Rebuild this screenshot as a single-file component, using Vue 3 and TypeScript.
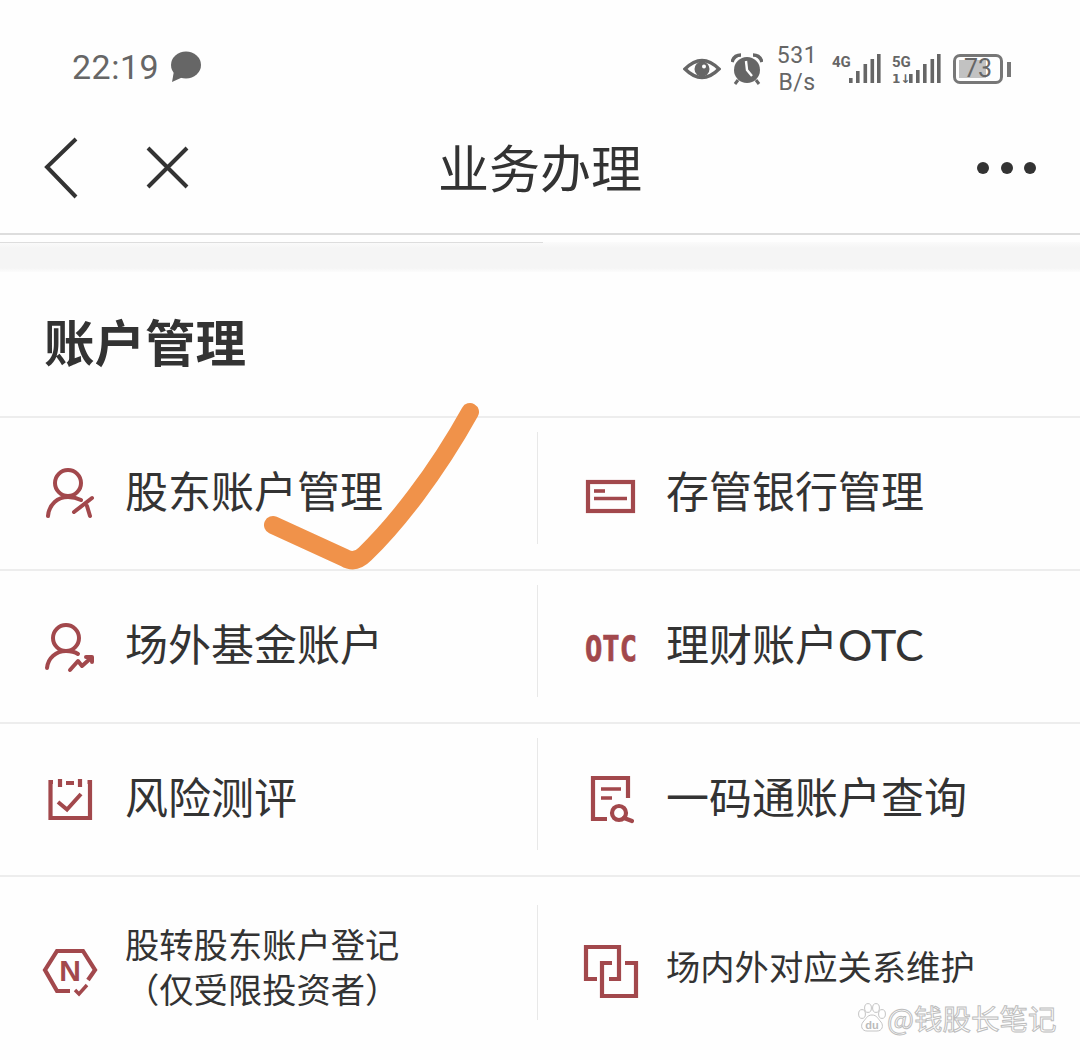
<script setup lang="ts">
interface Cell {
  icon: string
  label: string[]
  small?: boolean
}
interface Row {
  left: Cell
  right: Cell
  tall?: boolean
}
const rows: Row[] = [
  { left: { icon: 'user-slash', label: ['股东账户管理'] }, right: { icon: 'card', label: ['存管银行管理'] } },
  { left: { icon: 'user-trend', label: ['场外基金账户'] }, right: { icon: 'otc', label: ['理财账户OTC'] } },
  { left: { icon: 'calendar', label: ['风险测评'] }, right: { icon: 'doc-search', label: ['一码通账户查询'] } },
  {
    tall: true,
    left: { icon: 'hex', label: ['股转股东账户登记', '（仅受限投资者）'], small: true },
    right: { icon: 'squares', label: ['场内外对应关系维护'], small: true },
  },
]
const signalA = [
  { x: 0, h: 5 },
  { x: 7, h: 12 },
  { x: 14.5, h: 19 },
  { x: 21.5, h: 24 },
  { x: 28, h: 29 },
]
const signalB = [
  { x: 0, h: 9 },
  { x: 7, h: 13 },
  { x: 14, h: 19 },
  { x: 21.5, h: 24 },
  { x: 28, h: 29 },
]
</script>

<template>
  <div class="page">
    <header class="status">
      <div class="status-left">
        <span class="time">22:19</span>
        <svg class="bubble" width="34" height="32" viewBox="0 0 34 32">
          <ellipse cx="18" cy="14" rx="15" ry="13.5" fill="#666" />
          <path d="M6 20 L4 31 L15 26 Z" fill="#666" />
        </svg>
      </div>
      <div class="status-right">
        <svg width="38" height="24" viewBox="0 0 38 24">
          <path d="M2 12 Q19 -5 36 12 Q19 29 2 12 Z" fill="none" stroke="#666" stroke-width="3.4" />
          <circle cx="19" cy="12" r="7.5" fill="#666" />
          <circle cx="21" cy="9.5" r="2" fill="#fff" />
        </svg>
        <svg class="alarm" width="32" height="32" viewBox="0 0 32 32">
          <circle cx="16" cy="17" r="13" fill="#666" />
          <path d="M1 9 Q3 2 10 2 M31 9 Q29 2 22 2" fill="none" stroke="#666" stroke-width="3.4" />
          <path d="M7 27 L4 31 M25 27 L28 31" stroke="#666" stroke-width="3" />
          <path d="M15 8 L16 17 L21 23" fill="none" stroke="#fff" stroke-width="2.4" />
        </svg>
        <div class="speed">
          <span>531</span>
          <span>B/s</span>
        </div>
        <svg class="net" width="50" height="32" viewBox="0 0 50 32">
          <text x="0" y="14" class="net-text">4G</text>
          <rect v-for="b in signalA" :key="b.x" :x="b.x + 17" :y="30 - b.h" width="3.6" :height="b.h" fill="#666" />
        </svg>
        <svg class="net" width="50" height="32" viewBox="0 0 50 32">
          <text x="0" y="14" class="net-text">5G</text>
          <text x="0" y="30" class="net-sub">1↓</text>
          <rect v-for="b in signalB" :key="b.x" :x="b.x + 17" :y="30 - b.h" width="3.6" :height="b.h" fill="#666" />
        </svg>
        <div class="battery">
          <div class="battery-body">
            <div class="battery-fill"></div>
            <span class="battery-num">73</span>
          </div>
          <div class="battery-nub"></div>
        </div>
      </div>
    </header>

    <nav class="nav">
      <div class="nav-left">
        <svg width="34" height="62" viewBox="0 0 34 62">
          <path d="M32 2 L3 30 L32 60" fill="none" stroke="#333" stroke-width="4" />
        </svg>
        <svg class="nav-close" width="44" height="44" viewBox="0 0 44 44">
          <path d="M3 3 L42 42 M42 3 L3 42" fill="none" stroke="#333" stroke-width="4" />
        </svg>
      </div>
      <h1 class="nav-title">业务办理</h1>
      <div class="nav-right">
        <span class="dot"></span>
        <span class="dot"></span>
        <span class="dot"></span>
      </div>
    </nav>

    <div class="band">
      <div class="band-line"></div>
    </div>

    <section class="section-head">
      <h2>账户管理</h2>
    </section>

    <div class="rows">
      <div v-for="(row, i) in rows" :key="i" class="row" :class="{ tall: row.tall }">
        <div v-for="(cell, side) in [row.left, row.right]" :key="side" class="cell" :class="side === 0 ? 'cell-left' : 'cell-right'">
          <svg class="icon" width="60" height="60" viewBox="0 0 60 60">
            <g v-if="cell.icon === 'user-slash'" fill="none" stroke="#a2484c" stroke-width="4" stroke-linecap="round">
              <circle cx="28" cy="19" r="13" />
              <path d="M8 52 C9 40 18 33 28 33 C33 33 37 34 41 36" />
              <path d="M34 48 L52 34" />
              <path d="M47 42 L50 52" />
            </g>
            <g v-else-if="cell.icon === 'user-trend'" fill="none" stroke="#a2484c" stroke-width="4" stroke-linecap="round" stroke-linejoin="round">
              <circle cx="26" cy="21" r="13" />
              <path d="M7 51 C8 41 16 34 26 34 C31 34 35 35 38 37" />
              <path d="M30 53 L38 44 L42 49 L51 41" />
              <path d="M46 40 L52 40 L52 45" />
            </g>
            <g v-else-if="cell.icon === 'card'" fill="none" stroke="#a2484c">
              <rect x="8" y="18" width="45" height="29" stroke-width="4.2" />
              <path d="M14 27 H25" stroke-width="3.6" />
              <path d="M14 34.5 H47" stroke-width="3.6" />
            </g>
            <text
              v-else-if="cell.icon === 'otc'"
              transform="translate(5 44) scale(1 1.2)"
              textLength="52"
              lengthAdjust="spacingAndGlyphs"
              class="otc"
            >OTC</text>
            <g v-else-if="cell.icon === 'calendar'" fill="none" stroke="#a2484c" stroke-width="4.2">
              <path d="M13 12 H10.5 V48 H50 V12 H47.5" />
              <path d="M20 9 V17 M40 9 V17 M26 13 H34" />
              <path d="M18 32 L27 39.5 L41 24" stroke-width="4" />
            </g>
            <g v-else-if="cell.icon === 'doc-search'" fill="none" stroke="#a2484c" stroke-width="4.2">
              <path d="M27 49 H13 V8 H48 V28" />
              <path d="M21 19 H41 M21 28 H32" stroke-width="3.6" />
              <circle cx="39" cy="43" r="7" />
              <path d="M44 48 L52 51" stroke-linecap="round" />
            </g>
            <g v-else-if="cell.icon === 'hex'" fill="none" stroke="#a2484c" stroke-width="4.2">
              <path d="M48 41 L55 31 L43 12 L17 12 L5 31 L17 52 L30 52" />
              <path d="M35 51 L39 55 L47 46" stroke-width="3.4" />
              <text x="30" y="42" text-anchor="middle" class="hex-n">N</text>
            </g>
            <g v-else fill="none" stroke="#a2484c" stroke-width="4.2">
              <path d="M17 40 H6 V8 H39 V40 H29" />
              <path d="M32 24 H22 V57 H56 V24 H45" />
            </g>
          </svg>
          <div class="label" :class="{ small: cell.small }">
            <div v-for="line in cell.label" :key="line">{{ line }}</div>
          </div>
          <div v-if="side === 0" class="divider"></div>
        </div>
      </div>
    </div>

    <svg class="tick" width="230" height="180" viewBox="0 0 230 180">
      <path
        d="M13 125 L85 158 Q95 164 105 154 C135 125 175 75 210 12"
        fill="none"
        stroke="#f0924a"
        stroke-width="18"
        stroke-linecap="round"
        stroke-linejoin="round"
      />
    </svg>

    <div class="watermark">
      <svg width="30" height="30" viewBox="0 0 30 30">
        <g fill="#fff" stroke="#c4c4c4" stroke-width="1">
          <ellipse cx="5" cy="11" rx="3.4" ry="4.4" />
          <ellipse cx="11" cy="5" rx="3.4" ry="4.4" />
          <ellipse cx="19" cy="5" rx="3.4" ry="4.4" />
          <ellipse cx="25" cy="11" rx="3.4" ry="4.4" />
          <path d="M15 12 C10 12 9 16 6 19 C3 23 5 28 10 28 H20 C25 28 27 23 24 19 C21 16 20 12 15 12 Z" />
        </g>
        <text x="15" y="26" text-anchor="middle" class="du">du</text>
      </svg>
      <span class="wm-text">@钱股长笔记</span>
    </div>
  </div>
</template>

<style scoped>
.page {
  position: relative;
  width: 1080px;
  height: 1060px;
  overflow: hidden;
  background: #fefefe;
  color: #333;
  font-family: "Noto Sans CJK SC", "Noto Sans", sans-serif;
}

.status {
  height: 110px;
  box-sizing: border-box;
  padding: 0 69px 0 72px;
  display: flex;
  justify-content: space-between;
  align-items: flex-start;
  color: #666;
}
.status-left {
  display: flex;
  align-items: center;
  gap: 9px;
  padding-top: 46px;
}
.time {
  font-family: Roboto, sans-serif;
  font-size: 34px;
  line-height: 42px;
  letter-spacing: 0.5px;
}
.status-right {
  display: flex;
  align-items: center;
  padding-top: 42px;
}
.alarm {
  margin-left: 10px;
}
.speed {
  margin-left: 14px;
  width: 40px;
  display: flex;
  flex-direction: column;
  align-items: center;
  font-family: Roboto, sans-serif;
  font-size: 23px;
  line-height: 27px;
  letter-spacing: 0.5px;
}
.net {
  margin-left: 15px;
}
.net + .net {
  margin-left: 10px;
}
.net-text {
  font-family: "Liberation Sans Narrow", "Roboto", sans-serif;
  font-size: 15px;
  font-weight: 700;
  fill: #666;
}
.net-sub {
  font-family: "DejaVu Sans", sans-serif;
  font-size: 12px;
  font-weight: 700;
  fill: #666;
}
.battery {
  margin-left: 11px;
  display: flex;
  align-items: center;
  gap: 4px;
}
.battery-body {
  position: relative;
  width: 50px;
  height: 30px;
  box-sizing: border-box;
  border: 3px solid #777;
  border-radius: 7px;
  padding: 3px;
}
.battery-fill {
  width: 72%;
  height: 100%;
  background: #c2c2c2;
}
.battery-num {
  position: absolute;
  inset: 0;
  text-align: center;
  font-family: Roboto, sans-serif;
  font-size: 25px;
  line-height: 24px;
  color: #666;
}
.battery-nub {
  width: 4px;
  height: 15px;
  background: #777;
}

.nav {
  height: 125px;
  box-sizing: border-box;
  border-bottom: 2px solid #ddd;
  padding: 0 44px 8px;
  display: grid;
  grid-template-columns: 1fr auto 1fr;
  align-items: center;
}
.nav-left {
  display: flex;
  align-items: center;
  gap: 67px;
}
.nav-close {
  margin-bottom: 2px;
}
.nav-title {
  margin: 0 0 4px;
  font-size: 51px;
  font-weight: 400;
  line-height: 60px;
  color: #333;
}
.nav-right {
  display: flex;
  justify-content: flex-end;
  gap: 11.5px;
}
.dot {
  width: 12px;
  height: 12px;
  border-radius: 50%;
  background: #333;
}

.band {
  margin-top: 7px;
  height: 30px;
  background: linear-gradient(#fbfbfb, #f5f5f5 6px, #f5f5f5 26px, #fcfcfc);
}
.band-line {
  width: 543px;
  height: 1px;
  background: #ddd;
}

.section-head {
  height: 144px;
  box-sizing: border-box;
  display: flex;
  align-items: center;
  padding: 0 0 8px 44px;
}
.section-head h2 {
  margin: 0;
  font-size: 50.5px;
  font-weight: 700;
  line-height: 60px;
  color: #333;
}

.row {
  height: 153px;
  box-sizing: border-box;
  border-top: 2px solid #ededed;
  display: flex;
}
.row.tall {
  height: 185px;
}
.cell {
  display: flex;
  align-items: center;
}
.cell-left {
  position: relative;
  width: 538px;
  padding-left: 40px;
  box-sizing: border-box;
  gap: 25px;
}
.cell-right {
  flex: 1;
  padding-left: 42px;
  gap: 26px;
}
.icon {
  flex: none;
}
.divider {
  position: absolute;
  right: 0;
  top: 14px;
  width: 1px;
  height: 112px;
  background: #e8e8e8;
}
.tall .divider {
  top: 28px;
  height: 115px;
}
.label {
  padding-bottom: 3px;
  font-family: Lato, "Noto Sans CJK SC", sans-serif;
  font-size: 43px;
  line-height: 52px;
  color: #333;
  text-align: center;
}
.label.small {
  padding-bottom: 4px;
  font-size: 34.3px;
  line-height: 45px;
}
.otc {
  font-family: "DejaVu Sans Mono", monospace;
  font-size: 30px;
  font-weight: 700;
  fill: #a2484c;
  stroke: #a2484c;
  stroke-width: 0.6px;
}
.hex-n {
  font-family: "Liberation Sans", sans-serif;
  font-size: 30px;
  font-weight: 700;
  fill: #a2484c;
  stroke: none;
}
.tick {
  position: absolute;
  left: 260px;
  top: 400px;
}
.watermark {
  position: absolute;
  left: 857px;
  top: 1001px;
  display: flex;
  align-items: center;
  gap: 0;
}
.du {
  font-family: "Liberation Sans", sans-serif;
  font-size: 11px;
  font-weight: 700;
  fill: #bbb;
}
.wm-text {
  font-size: 28.5px;
  line-height: 34px;
  color: #fff;
  -webkit-text-stroke: 1px #bdbdbd;
}
</style>

<style>
html,
body {
  margin: 0;
  background: #fefefe;
}
</style>
